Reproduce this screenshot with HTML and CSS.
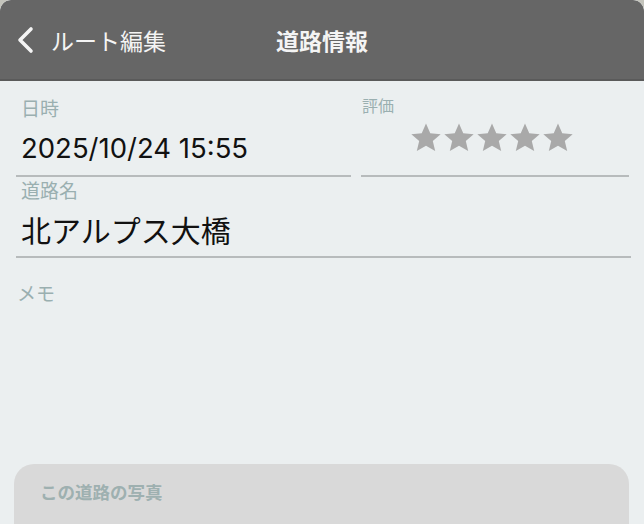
FILE: index.html
```html
<!DOCTYPE html>
<html lang="ja">
<head>
  <meta charset="UTF-8">
  <title>道路情報</title>
  <link rel="stylesheet" href="styles.css">
</head>
<body>

  <div class="navbar">
    <button class="back-btn">
      <svg width="20" height="28" viewBox="0 0 20 28"><path d="M15 3 L4 14 L15 25" fill="none" stroke="#f4f4f4" stroke-width="3.6" stroke-linecap="round" stroke-linejoin="round"/></svg>
      <span>ルート編集</span>
    </button>
    <h1 class="nav-title">道路情報</h1>
    <div></div>
  </div>

  <div class="form">
    <div class="row">
      <div class="field field-date">
        <label class="field-label">日時</label>
        <div class="field-value date-value">2025/10/24 15:55</div>
      </div>
      <div class="field field-rating">
        <label class="field-label small">評価</label>
        <div class="stars">
          <svg viewBox="0 0 24 24"><path d="M12 1.2l3.2 7.2 7.8.7-5.9 5.1 1.8 7.6L12 17.8 5.1 21.8l1.8-7.6L1 9.1l7.8-.7z"/></svg>
          <svg viewBox="0 0 24 24"><path d="M12 1.2l3.2 7.2 7.8.7-5.9 5.1 1.8 7.6L12 17.8 5.1 21.8l1.8-7.6L1 9.1l7.8-.7z"/></svg>
          <svg viewBox="0 0 24 24"><path d="M12 1.2l3.2 7.2 7.8.7-5.9 5.1 1.8 7.6L12 17.8 5.1 21.8l1.8-7.6L1 9.1l7.8-.7z"/></svg>
          <svg viewBox="0 0 24 24"><path d="M12 1.2l3.2 7.2 7.8.7-5.9 5.1 1.8 7.6L12 17.8 5.1 21.8l1.8-7.6L1 9.1l7.8-.7z"/></svg>
          <svg viewBox="0 0 24 24"><path d="M12 1.2l3.2 7.2 7.8.7-5.9 5.1 1.8 7.6L12 17.8 5.1 21.8l1.8-7.6L1 9.1l7.8-.7z"/></svg>
        </div>
      </div>
    </div>

    <div class="field field-name">
      <label class="field-label">道路名</label>
      <div class="field-value">北アルプス大橋</div>
    </div>

    <div class="memo">メモ</div>

    <div class="photo-card">
      <h2>この道路の写真</h2>
    </div>
  </div>

</body>
</html>
```

FILE: styles.css
```css
html {
  background-color: #c4c4bc;
  height: 524px;
  overflow: hidden;
}
body {
  margin: 0;
  font-family: "Noto Sans CJK JP", sans-serif;
  background-color: #ebeff0;
  border-radius: 11px 11px 0 0;
  height: 524px;
  overflow: hidden;
}
.navbar {
  height: 79px;
  background-color: #666666;
  border-bottom: 2px solid #5a5a5a;
  border-radius: 11px 11px 0 0;
  display: grid;
  grid-template-columns: 1fr auto 1fr;
  align-items: center;
  color: #f4f4f4;
}
.back-btn {
  display: flex;
  align-items: center;
  gap: 15px;
  padding: 0 0 0 16px;
  background: none;
  border: none;
  color: #f4f4f4;
  font-family: inherit;
  font-size: 23px;
  line-height: 30px;
}
.back-btn svg {
  display: block;
}
.nav-title {
  margin: 0;
  font-size: 23px;
  font-weight: bold;
  line-height: 30px;
}
.form {
  padding: 15px 13px 0 16px;
}
.row {
  display: flex;
  gap: 10px;
}
.field {
  border-bottom: 2px solid #b7bbbc;
}
.field-date {
  width: 335px;
  padding-bottom: 9px;
}
.field-rating {
  flex: 1;
  margin-right: 2px;
}
.field-label {
  display: block;
  padding-left: 5px;
  font-size: 19px;
  line-height: 24px;
  color: #9aafb0;
}
.field-label.small {
  padding-left: 1px;
  font-size: 16px;
  line-height: 20px;
  margin-top: -1px;
}
.field-value {
  padding-left: 5px;
  margin-top: 10px;
  font-family: Inter, "Noto Sans CJK JP", sans-serif;
  font-size: 30px;
  line-height: 38px;
  color: #111111;
}
.date-value {
  font-size: 27.5px;
  line-height: 36px;
}
.stars {
  display: flex;
  gap: 1px;
  padding-left: 49px;
  margin-top: 7px;
}
.stars svg {
  width: 32px;
  height: 32px;
  fill: #a9a9a9;
}
.field-name {
  padding-top: 1px;
  padding-bottom: 6px;
}
.field-name .field-value {
  margin-top: 10px;
}
.memo {
  height: 206px;
  padding-top: 23px;
  font-size: 19px;
  line-height: 24px;
  color: #9aafb0;
  box-sizing: border-box;
  margin-left: 1px;
}
.photo-card {
  margin: 0 2px 0 -2px;
  height: 60px;
  box-sizing: border-box;
  background-color: #d9d9d9;
  border-radius: 20px 20px 0 0;
  padding: 16px 26px 0;
}
.photo-card h2 {
  margin: 0;
  font-size: 17.5px;
  line-height: 24px;
  color: #9eb0b0;
}
```
